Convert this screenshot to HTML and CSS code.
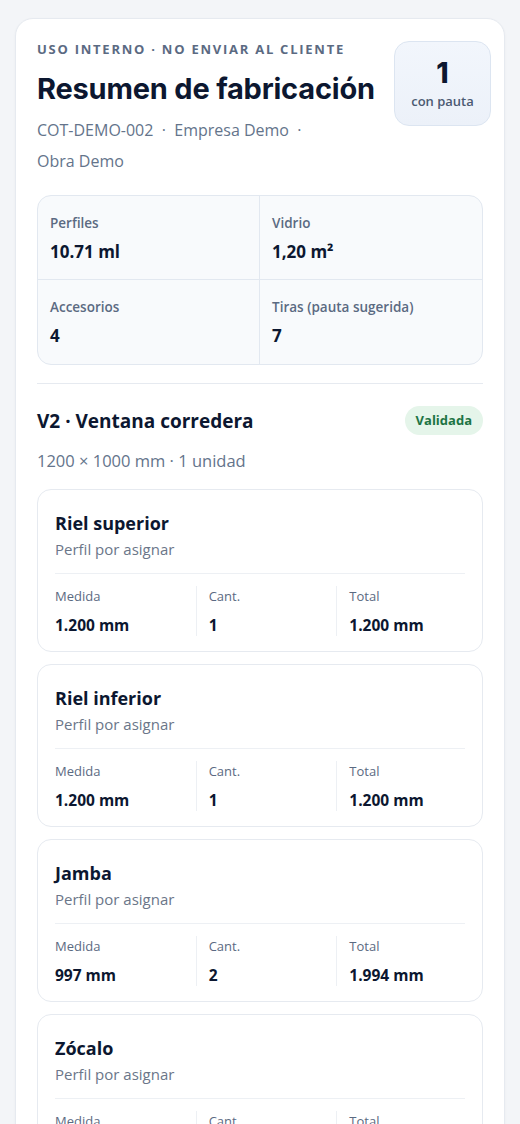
FILE: index.html
```html
<!DOCTYPE html>
<html lang="es">
<head>
<meta charset="utf-8">
<title>Resumen de fabricación</title>
<link rel="stylesheet" href="styles.css">
</head>
<body>
<main class="sheet">
  <header class="head">
    <div class="head-text">
      <div class="eyebrow">USO INTERNO · NO ENVIAR AL CLIENTE</div>
      <h1 class="title">Resumen de fabricación</h1>
      <p class="meta">COT-DEMO-002 &nbsp;·&nbsp; Empresa Demo &nbsp;·&nbsp; Obra Demo</p>
    </div>
    <div class="count">
      <div class="count-num">1</div>
      <div class="count-lbl">con pauta</div>
    </div>
  </header>

  <section class="stats">
    <div class="stat"><div class="stat-lbl">Perfiles</div><div class="stat-val">10.71 ml</div></div>
    <div class="stat"><div class="stat-lbl">Vidrio</div><div class="stat-val">1,20 m²</div></div>
    <div class="stat"><div class="stat-lbl">Accesorios</div><div class="stat-val">4</div></div>
    <div class="stat"><div class="stat-lbl">Tiras (pauta sugerida)</div><div class="stat-val">7</div></div>
  </section>

  <hr class="sep">

  <section class="item">
    <div class="item-head">
      <h2 class="item-title">V2 · Ventana corredera</h2>
      <span class="pill">Validada</span>
    </div>
    <p class="item-sub">1200 × 1000 mm · 1 unidad</p>

    <div class="parts">
      <article class="part">
        <h3 class="part-name">Riel superior</h3>
        <p class="part-profile">Perfil por asignar</p>
        <div class="part-grid">
          <div class="cell"><div class="cell-lbl">Medida</div><div class="cell-val">1.200 mm</div></div>
          <div class="cell"><div class="cell-lbl">Cant.</div><div class="cell-val">1</div></div>
          <div class="cell"><div class="cell-lbl">Total</div><div class="cell-val">1.200 mm</div></div>
        </div>
      </article>
      <article class="part">
        <h3 class="part-name">Riel inferior</h3>
        <p class="part-profile">Perfil por asignar</p>
        <div class="part-grid">
          <div class="cell"><div class="cell-lbl">Medida</div><div class="cell-val">1.200 mm</div></div>
          <div class="cell"><div class="cell-lbl">Cant.</div><div class="cell-val">1</div></div>
          <div class="cell"><div class="cell-lbl">Total</div><div class="cell-val">1.200 mm</div></div>
        </div>
      </article>
      <article class="part">
        <h3 class="part-name">Jamba</h3>
        <p class="part-profile">Perfil por asignar</p>
        <div class="part-grid">
          <div class="cell"><div class="cell-lbl">Medida</div><div class="cell-val">997 mm</div></div>
          <div class="cell"><div class="cell-lbl">Cant.</div><div class="cell-val">2</div></div>
          <div class="cell"><div class="cell-lbl">Total</div><div class="cell-val">1.994 mm</div></div>
        </div>
      </article>
      <article class="part">
        <h3 class="part-name">Zócalo</h3>
        <p class="part-profile">Perfil por asignar</p>
        <div class="part-grid">
          <div class="cell"><div class="cell-lbl">Medida</div><div class="cell-val">1.200 mm</div></div>
          <div class="cell"><div class="cell-lbl">Cant.</div><div class="cell-val">2</div></div>
          <div class="cell"><div class="cell-lbl">Total</div><div class="cell-val">2.400 mm</div></div>
        </div>
      </article>
    </div>
  </section>
</main>
</body>
</html>
```

FILE: styles.css
```css
* { box-sizing: border-box; }
html, body { margin: 0; padding: 0; }
body {
  background: #f3f5f8;
  font-family: "Open Sans", "Liberation Sans", sans-serif;
  color: #0f1a30;
  padding: 18px 15px 0;
}
.sheet {
  background: #ffffff;
  border: 1px solid #e6eaf0;
  border-radius: 18px;
  padding: 22px 21px 40px;
  box-shadow: 0 1px 3px rgba(15, 26, 48, 0.04);
}
.head {
  display: flex;
  justify-content: space-between;
  align-items: flex-start;
  gap: 12px;
}
.head-text { flex: 1; min-width: 0; }
.eyebrow {
  font-size: 13px;
  font-weight: 700;
  letter-spacing: 1.75px;
  color: #5b6a82;
  line-height: 16px;
  white-space: nowrap;
}
.title {
  margin: 15px 0 0;
  font-family: "Inter", "Liberation Sans", sans-serif;
  font-size: 29px;
  font-weight: 700;
  letter-spacing: -0.2px;
  line-height: 34px;
  color: #0c1730;
  white-space: nowrap;
}
.meta {
  margin: 9px 0 0;
  font-size: 16px;
  line-height: 31px;
  color: #64748b;
  max-width: 290px;
}
.count {
  flex: none;
  width: 97px;
  height: 85px;
  margin-top: 0;
  margin-right: -8px;
  border: 1px solid #dce5f1;
  border-radius: 15px;
  background: linear-gradient(180deg, #f2f6fc 0%, #ecf1f9 100%);
  display: flex;
  flex-direction: column;
  align-items: center;
  justify-content: center;
}
.count-num {
  font-family: "Inter", "Liberation Sans", sans-serif;
  font-size: 28px;
  font-weight: 800;
  line-height: 32px;
  color: #0c1730;
}
.count-lbl {
  margin-top: 3px;
  font-size: 13px;
  font-weight: 600;
  color: #4b5a72;
}
.stats {
  margin-top: 18px;
  display: grid;
  grid-template-columns: 1fr 1fr;
  border: 1px solid #e2e8f0;
  border-radius: 14px;
  background: #f8fafc;
  overflow: hidden;
}
.stat {
  padding: 17px 12px 0;
  height: 84px;
}
.stat:nth-child(odd) { border-right: 1px solid #e2e8f0; }
.stat:nth-child(-n+2) { border-bottom: 1px solid #e2e8f0; }
.stat-lbl {
  font-size: 13.5px;
  font-weight: 600;
  color: #5b6a82;
  line-height: 20px;
}
.stat-val {
  margin-top: 7px;
  font-size: 17px;
  font-weight: 700;
  color: #0c1730;
  line-height: 24px;
}
.sep {
  margin: 18px 0 0;
  border: 0;
  border-top: 1px solid #e6eaf0;
}
.item { margin-top: 22px; }
.item-head {
  display: flex;
  justify-content: space-between;
  align-items: center;
}
.item-title {
  margin: 0;
  font-size: 19px;
  font-weight: 700;
  color: #0c1730;
  line-height: 28px;
}
.pill {
  background: #e5f5ea;
  color: #1d7444;
  font-size: 13px;
  font-weight: 700;
  padding: 5px 11px;
  border-radius: 999px;
  line-height: 19px;
}
.item-sub {
  margin: 14px 0 0;
  font-size: 16.5px;
  color: #64748b;
  line-height: 24px;
}
.parts {
  margin-top: 16px;
  display: flex;
  flex-direction: column;
  gap: 12px;
}
.part {
  border: 1px solid #e6eaf0;
  border-radius: 14px;
  padding: 20px 17px 15px;
  background: #fff;
}
.part-name {
  margin: 0;
  font-size: 18px;
  font-weight: 700;
  line-height: 26px;
  color: #0c1730;
}
.part-profile {
  margin: 2px 0 0;
  font-size: 15px;
  color: #6b7689;
  line-height: 22px;
}
.part-grid {
  margin-top: 13px;
  border-top: 1px solid #edf0f4;
  padding-top: 12px;
  display: grid;
  grid-template-columns: 1fr 1fr 1fr;
  column-gap: 12px;
}
.cell {
  padding: 0 0 0 12px;
  border-left: 1px solid #edf0f4;
}
.cell:first-child { border-left: 0; padding-left: 0; }
.cell-lbl {
  font-size: 13px;
  font-weight: 500;
  color: #5b6a82;
  line-height: 20px;
}
.cell-val {
  margin-top: 8px;
  font-size: 15.5px;
  font-weight: 700;
  color: #0c1730;
  line-height: 22px;
}
```
